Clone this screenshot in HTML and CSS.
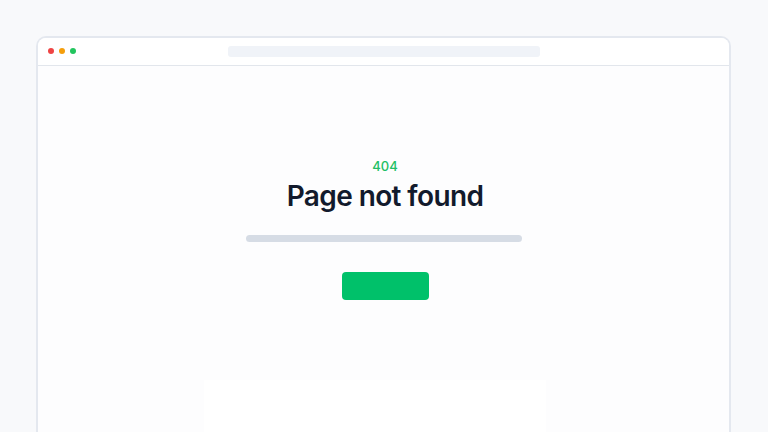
FILE: index.html
```html
<!DOCTYPE html>
<html lang="en">
<head>
<meta charset="utf-8">
<title>404 - Page not found</title>
<link rel="stylesheet" href="styles.css">
</head>
<body>
  <div class="frame">
    <div class="topbar">
      <div class="dots">
        <span class="dot red"></span>
        <span class="dot amber"></span>
        <span class="dot green"></span>
      </div>
      <div class="address"></div>
    </div>
    <main class="content">
      <div class="code">404</div>
      <h1 class="title">Page not found</h1>
      <div class="line"></div>
      <div class="button"></div>
      <div class="ghost"></div>
    </main>
  </div>
</body>
</html>
```

FILE: styles.css
```css
html, body {
  margin: 0;
  height: 100%;
  overflow: hidden;
}
body {
  background: #f8f9fb;
  padding: 36px 37px 0 36px;
  box-sizing: border-box;
  font-family: Inter, "Noto Sans", sans-serif;
}
.frame {
  box-sizing: border-box;
  height: 396px;
  border: 2px solid #e4e8ef;
  border-bottom: none;
  border-radius: 10px 10px 0 0;
  background: #fdfdfe;
  overflow: hidden;
}
.topbar {
  position: relative;
  height: 27px;
  border-bottom: 1px solid #e2e6ec;
  background: #ffffff;
  display: flex;
  align-items: center;
  justify-content: center;
}
.dots {
  position: absolute;
  left: 10px;
  top: 10px;
  display: flex;
  gap: 5px;
}
.dot {
  width: 6px;
  height: 6px;
  border-radius: 50%;
}
.red { background: #ef4444; }
.amber { background: #f59e0b; }
.green { background: #22c55e; }
.address {
  width: 312px;
  height: 11px;
  border-radius: 3px;
  background: #f0f3f8;
}
.content {
  display: flex;
  flex-direction: column;
  align-items: center;
  padding-top: 92px;
  padding-left: 3px;
}
.code {
  font-size: 13px;
  line-height: 16px;
  font-weight: 500;
  color: #1fbf66;
}
.title {
  margin: 5px 0 0;
  font-size: 28px;
  line-height: 34px;
  font-weight: 600;
  color: #121a2c;
  letter-spacing: -0.6px;
}
.line {
  margin-top: 22px;
  margin-right: 3px;
  width: 276px;
  height: 7px;
  border-radius: 4px;
  background: #d6dce5;
}
.button {
  margin-top: 30px;
  width: 87px;
  height: 28px;
  border-radius: 4px;
  background: #00c16a;
}
.ghost {
  margin-top: 80px;
  margin-right: 21px;
  width: 342px;
  height: 52px;
  background: #ffffff;
}
```
